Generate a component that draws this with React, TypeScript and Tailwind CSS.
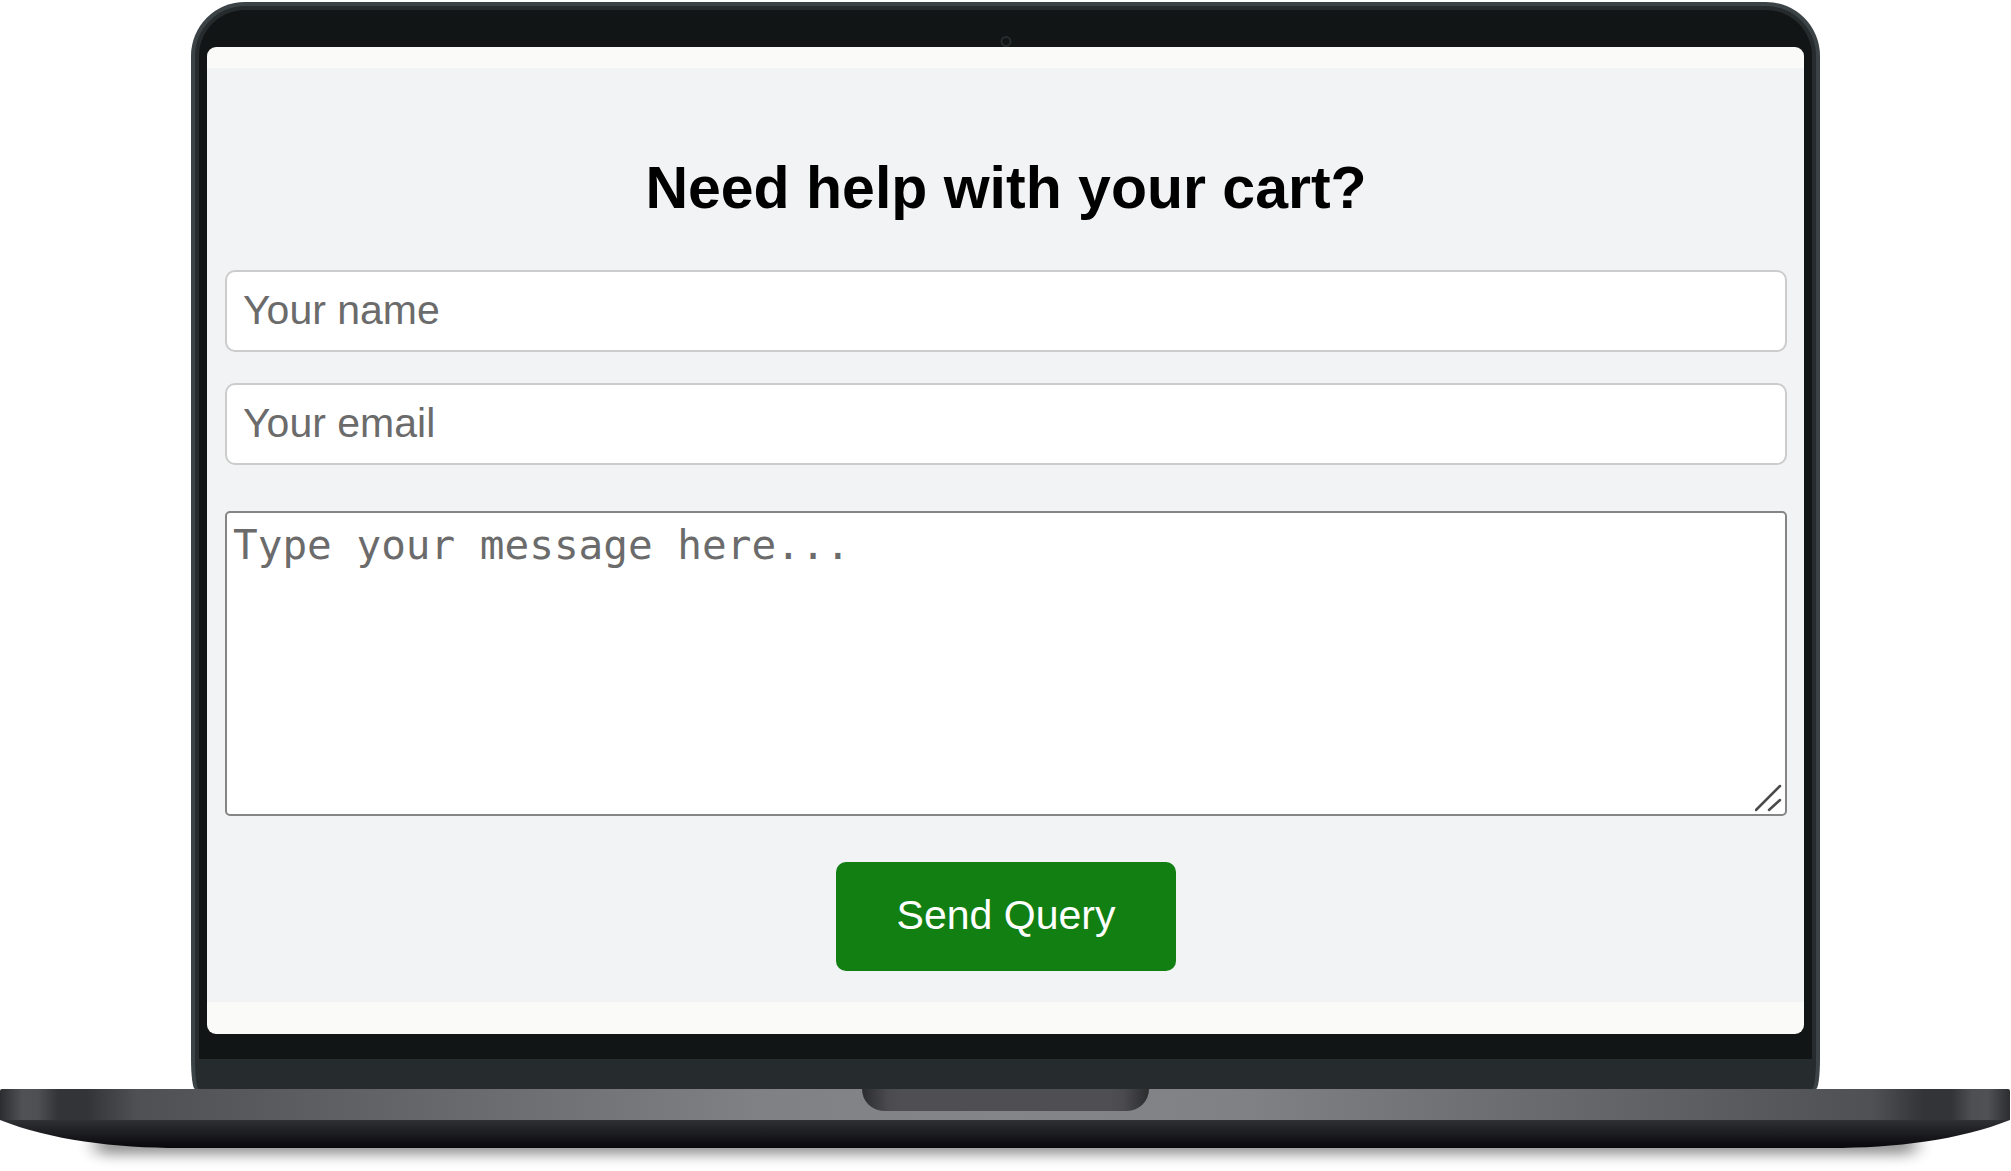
import React, { useState } from 'react';

// Bottom half of the laptop: hinge bar, thumb notch, underside and floor shadow
const LaptopBase: React.FC = () => (
  <svg
    className="block w-full h-[82px]"
    viewBox="0 0 2011 82"
    preserveAspectRatio="none"
    aria-hidden="true"
  >
    <defs>
      <linearGradient id="bar" gradientUnits="userSpaceOnUse" x1="0" y1="0" x2="2010" y2="0">
        <stop offset="0" stopColor="#2c2d30" />
        <stop offset="0.011" stopColor="#505154" />
        <stop offset="0.019" stopColor="#4e4f52" />
        <stop offset="0.029" stopColor="#333437" />
        <stop offset="0.043" stopColor="#333437" />
        <stop offset="0.068" stopColor="#4f5053" />
        <stop offset="0.2" stopColor="#646568" />
        <stop offset="0.38" stopColor="#808184" />
        <stop offset="0.5" stopColor="#848588" />
        <stop offset="0.62" stopColor="#808184" />
        <stop offset="0.8" stopColor="#646568" />
        <stop offset="0.932" stopColor="#4f5053" />
        <stop offset="0.957" stopColor="#333437" />
        <stop offset="0.971" stopColor="#333437" />
        <stop offset="0.981" stopColor="#4e4f52" />
        <stop offset="0.989" stopColor="#505154" />
        <stop offset="1" stopColor="#2c2d30" />
      </linearGradient>
      <linearGradient id="under" x1="0" y1="0" x2="0" y2="1">
        <stop offset="0" stopColor="#2f3034" />
        <stop offset="1" stopColor="#08080c" />
      </linearGradient>
      <linearGradient id="notch" x1="0" y1="0" x2="1" y2="0">
        <stop offset="0" stopColor="#2b2c2e" />
        <stop offset="0.09" stopColor="#4b4b4f" />
        <stop offset="0.14" stopColor="#4f4f53" />
        <stop offset="0.86" stopColor="#4f4f53" />
        <stop offset="0.91" stopColor="#4b4b4f" />
        <stop offset="1" stopColor="#2b2c2e" />
      </linearGradient>
      <filter id="soft" x="-5%" y="-150%" width="110%" height="400%">
        <feGaussianBlur stdDeviation="9 7" />
      </filter>
    </defs>
    <rect x="94" y="46" width="1823" height="19" rx="9" fill="#000" opacity="0.45" filter="url(#soft)" />
    <path d="M0 31C50 51 115 59 180 59H1830C1895 59 1960 51 2010 31Z" fill="url(#under)" />
    <path d="M2 0H2008Q2010 0 2010 2V31H0V2Q0 0 2 0Z" fill="url(#bar)" />
    <path d="M862 0H1149A22 22 0 0 1 1127 22H884A22 22 0 0 1 862 0Z" fill="url(#notch)" />
  </svg>
);

const fieldClass =
  'block w-full h-[82px] px-4 pb-0.5 rounded-[10px] border-2 border-[#cccccc] bg-white text-[41px] text-black placeholder:text-[#6b6b6b] outline-none';

const QueryForm: React.FC = () => {
  const [name, setName] = useState('');
  const [email, setEmail] = useState('');
  const [message, setMessage] = useState('');

  const handleSubmit = (e: React.FormEvent) => {
    e.preventDefault();
    setName('');
    setEmail('');
    setMessage('');
  };

  return (
    <form
      onSubmit={handleSubmit}
      className="flex flex-col bg-[#f2f3f5] pl-[18px] pr-[17px] pt-[85px] pb-[31px]"
    >
      <h2 className="text-center text-[59px] leading-[70px] font-bold text-black">
        Need help with your cart?
      </h2>

      <div className="flex flex-col gap-[31px] mt-[47px]">
        <input
          type="text"
          aria-label="Your name"
          placeholder="Your name"
          value={name}
          onChange={(e) => setName(e.target.value)}
          className={fieldClass}
        />
        <input
          type="email"
          aria-label="Your email"
          placeholder="Your email"
          value={email}
          onChange={(e) => setEmail(e.target.value)}
          className={fieldClass}
        />
      </div>

      <div className="relative mt-[46px]">
        <textarea
          aria-label="Message"
          placeholder="Type your message here..."
          value={message}
          onChange={(e) => setMessage(e.target.value)}
          className="block w-full h-[305px] resize-none rounded-[5px] border-2 border-[#858585] bg-white px-1.5 py-1.5 font-['DejaVu_Sans_Mono',monospace] text-[41px] leading-[52px] text-black placeholder:text-[#6b6b6b] outline-none"
        />
        {/* Resize grip */}
        <svg
          className="absolute right-1 bottom-1 w-7 h-7 pointer-events-none"
          viewBox="0 0 28 28"
          stroke="#4a4a4a"
          strokeWidth="2.5"
          strokeLinecap="round"
          aria-hidden="true"
        >
          <path d="M1 26L25 2M14 26L25 16" />
        </svg>
      </div>

      <button
        type="submit"
        className="self-center mt-[46px] h-[109px] px-[61px] pb-0.5 rounded-[10px] bg-[#117f12] text-[41px] text-white cursor-pointer"
      >
        Send Query
      </button>
    </form>
  );
};

export default function App() {
  return (
    <main className="bg-white pt-0.5 overflow-hidden font-['Liberation_Sans',Arial,sans-serif]">
      {/* Lid */}
      <div className="mx-[9.5%] p-1 pb-0 bg-[#3c4346] [border-radius:54px_54px_4px_4px/54px_54px_30px_30px]">
        <div className="p-1 pb-[30px] bg-[#262b2d] [border-radius:50px_50px_4px_4px/50px_50px_30px_30px]">
          <div className="relative rounded-t-[46px] bg-[#111516] px-2 pt-[37px] pb-[25px]">
            <span className="absolute left-1/2 top-[26px] -translate-x-1/2 w-[11px] h-[11px] rounded-full border-2 border-[#262b2d]" />
            <div className="overflow-hidden rounded-[9px] bg-[#fafaf8] pt-[21px] pb-8">
              <QueryForm />
            </div>
          </div>
        </div>
      </div>
      <LaptopBase />
    </main>
  );
}
